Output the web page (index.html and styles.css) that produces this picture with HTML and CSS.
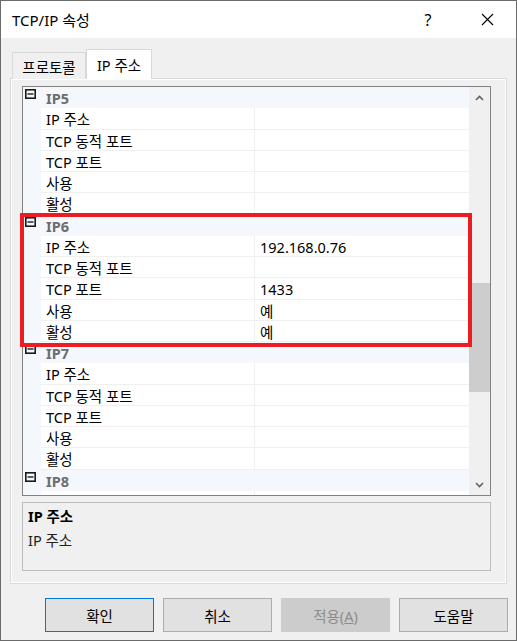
FILE: index.html
```html
<!DOCTYPE html>
<html lang="ko">
<head>
    <meta charset="UTF-8">
    <title>TCP/IP 속성</title>
    <link rel="stylesheet" href="styles.css">
</head>
<body>
    <div class="window">
        <div class="titlebar">
            <span class="title">TCP/IP 속성</span>
            <span class="help">?</span>
            <span class="close">
                <svg width="13" height="13" viewBox="0 0 13 13"><path d="M1 1 L12 12 M12 1 L1 12" stroke="#000" stroke-width="1.1" fill="none"/></svg>
            </span>
        </div>

        <div class="tabs">
            <div class="tab">프로토콜</div>
            <div class="tab active">IP 주소</div>
        </div>

        <div class="panel">
            <div class="page">
                <div class="grid">
                    <div class="rows">
                        <div class="row cat">
                            <div class="margin"><svg width="11" height="10" viewBox="0 0 11 10"><rect x="0.8" y="0.8" width="9.4" height="8.4" stroke="#1a1a1a" stroke-width="1.6" fill="none"/><path d="M2.5 5 H8.5" stroke="#1a1a1a" stroke-width="1.4"/></svg></div>
                            <div class="label">IP5</div>
                        </div>
                        <div class="row"><div class="margin"></div><div class="name">IP 주소</div><div class="value"></div></div>
                        <div class="row"><div class="margin"></div><div class="name">TCP 동적 포트</div><div class="value"></div></div>
                        <div class="row"><div class="margin"></div><div class="name">TCP 포트</div><div class="value"></div></div>
                        <div class="row"><div class="margin"></div><div class="name">사용</div><div class="value"></div></div>
                        <div class="row"><div class="margin"></div><div class="name">활성</div><div class="value"></div></div>

                        <div class="row cat">
                            <div class="margin"><svg width="11" height="10" viewBox="0 0 11 10"><rect x="0.8" y="0.8" width="9.4" height="8.4" stroke="#1a1a1a" stroke-width="1.6" fill="none"/><path d="M2.5 5 H8.5" stroke="#1a1a1a" stroke-width="1.4"/></svg></div>
                            <div class="label">IP6</div>
                        </div>
                        <div class="row"><div class="margin"></div><div class="name">IP 주소</div><div class="value">192.168.0.76</div></div>
                        <div class="row"><div class="margin"></div><div class="name">TCP 동적 포트</div><div class="value"></div></div>
                        <div class="row"><div class="margin"></div><div class="name">TCP 포트</div><div class="value">1433</div></div>
                        <div class="row"><div class="margin"></div><div class="name">사용</div><div class="value">예</div></div>
                        <div class="row"><div class="margin"></div><div class="name">활성</div><div class="value">예</div></div>

                        <div class="row cat">
                            <div class="margin"><svg width="11" height="10" viewBox="0 0 11 10"><rect x="0.8" y="0.8" width="9.4" height="8.4" stroke="#1a1a1a" stroke-width="1.6" fill="none"/><path d="M2.5 5 H8.5" stroke="#1a1a1a" stroke-width="1.4"/></svg></div>
                            <div class="label">IP7</div>
                        </div>
                        <div class="row"><div class="margin"></div><div class="name">IP 주소</div><div class="value"></div></div>
                        <div class="row"><div class="margin"></div><div class="name">TCP 동적 포트</div><div class="value"></div></div>
                        <div class="row"><div class="margin"></div><div class="name">TCP 포트</div><div class="value"></div></div>
                        <div class="row"><div class="margin"></div><div class="name">사용</div><div class="value"></div></div>
                        <div class="row"><div class="margin"></div><div class="name">활성</div><div class="value"></div></div>

                        <div class="row cat">
                            <div class="margin"><svg width="11" height="10" viewBox="0 0 11 10"><rect x="0.8" y="0.8" width="9.4" height="8.4" stroke="#1a1a1a" stroke-width="1.6" fill="none"/><path d="M2.5 5 H8.5" stroke="#1a1a1a" stroke-width="1.4"/></svg></div>
                            <div class="label">IP8</div>
                        </div>
                        <div class="row"><div class="margin"></div><div class="name"></div><div class="value"></div></div>
                    </div>
                    <div class="scrollbar">
                        <div class="arrow">
                            <svg width="9" height="6" viewBox="0 0 9 6"><path d="M1 5 L4.5 1.5 L8 5" stroke="#606060" stroke-width="1.6" fill="none"/></svg>
                        </div>
                        <div class="track">
                            <div class="thumb"></div>
                        </div>
                        <div class="arrow">
                            <svg width="9" height="6" viewBox="0 0 9 6"><path d="M1 1 L4.5 4.5 L8 1" stroke="#606060" stroke-width="1.6" fill="none"/></svg>
                        </div>
                    </div>
                </div>

                <div class="desc">
                    <div class="desc-title">IP 주소</div>
                    <div class="desc-text">IP 주소</div>
                </div>
            </div>
        </div>

        <div class="buttons">
            <button class="default">확인</button>
            <button>취소</button>
            <button class="disabled">적용(<u>A</u>)</button>
            <button>도움말</button>
        </div>

        <div class="mark"></div>
    </div>
</body>
</html>
```

FILE: styles.css
```css
body {
    margin: 0;
    background: #fff;
    font-family: "Noto Sans", "Noto Sans CJK KR", sans-serif;
    color: #000;
}
.window {
    position: relative;
    width: 517px;
    height: 641px;
    box-sizing: border-box;
    border: 1px solid #6b6b6b;
    background: #f0f0f0;
}
.titlebar {
    height: 37px;
    background: #fff;
    display: flex;
    align-items: center;
    padding-left: 11px;
    padding-right: 19px;
    font-size: 15px;
}
.title {
    flex: 1;
}
.help {
    width: 20px;
    text-align: center;
    margin-right: 39px;
    font-size: 16px;
}
.close {
    width: 20px;
    height: 13px;
    display: flex;
    justify-content: center;
}

/* tabs */
.tabs {
    display: flex;
    align-items: flex-end;
    height: 30px;
    margin-top: 11px;
    margin-bottom: -1px;
    padding-left: 11px;
    position: relative;
    z-index: 1;
}
.tab {
    width: 74px;
    height: 27px;
    box-sizing: border-box;
    border: 1px solid #d9d9d9;
    border-bottom: none;
    background: #f0f0f0;
    font-size: 14.5px;
    display: flex;
    align-items: center;
    justify-content: center;
}
.tab.active {
    width: 66px;
    height: 30px;
    background: #fff;
    padding-bottom: 1px;
}
.panel {
    margin: 0 9px;
    height: 506px;
    box-sizing: border-box;
    border: 1px solid #d9d9d9;
    background: #fff;
    padding: 1px;
}
.page {
    height: 100%;
    background: #f0f0f0;
    padding: 6px 14px 0 10px;
    box-sizing: border-box;
}

/* property grid */
.grid {
    height: 410px;
    box-sizing: border-box;
    border: 1px solid #828282;
    display: flex;
    background: #fff;
}
.rows {
    width: 446px;
    overflow: hidden;
}
.row {
    display: flex;
    height: 21.25px;
    font-size: 14.5px;
    line-height: 21px;
}
.margin {
    width: 18px;
    background: #f4f7fc;
    flex-shrink: 0;
}
.name, .value {
    width: 214px;
    box-sizing: border-box;
    padding: 1px 0 0 5px;
    border-bottom: 1px solid #f0f0f0;
    white-space: nowrap;
    overflow: hidden;
}
.name {
    border-right: 1px solid #f0f0f0;
}
.row.cat {
    background: #f4f7fc;
}
.row.cat .margin svg {
    display: block;
    margin: 2px 0 0 2px;
}
.label {
    padding: 1px 0 0 5px;
    font-weight: bold;
    color: #6d6d6d;
}
.scrollbar {
    width: 21px;
    background: #f0f0f0;
    display: flex;
    flex-direction: column;
}
.arrow {
    height: 21px;
    display: flex;
    align-items: center;
    justify-content: center;
}
.track {
    flex: 1;
    padding-top: 175px;
}
.thumb {
    height: 109px;
    background: #cdcdcd;
}

/* description */
.desc {
    margin-top: 6px;
    height: 69px;
    box-sizing: border-box;
    border: 1px solid #bcbcbc;
    padding: 3px 5px;
    font-size: 14.5px;
}
.desc-title {
    font-weight: bold;
    line-height: 20px;
}
.desc-text {
    margin-top: 4px;
    line-height: 20px;
    color: #222;
}

/* buttons */
.buttons {
    display: flex;
    justify-content: flex-end;
    gap: 9px;
    margin-top: 14px;
    padding-right: 8px;
}
button {
    width: 109px;
    height: 34px;
    background: #e1e1e1;
    border: 1px solid #adadad;
    font-family: inherit;
    font-size: 14.5px;
    color: #000;
    padding: 0;
}
button.default {
    border-color: #0078d7;
}
button.disabled {
    background: #cccccc;
    border-color: #cccccc;
    color: #8d8d8d;
}

/* red annotation box */
.mark {
    position: absolute;
    left: 19px;
    top: 212px;
    width: 452px;
    height: 134px;
    box-sizing: border-box;
    border: 4px solid #ed1c24;
}
```
